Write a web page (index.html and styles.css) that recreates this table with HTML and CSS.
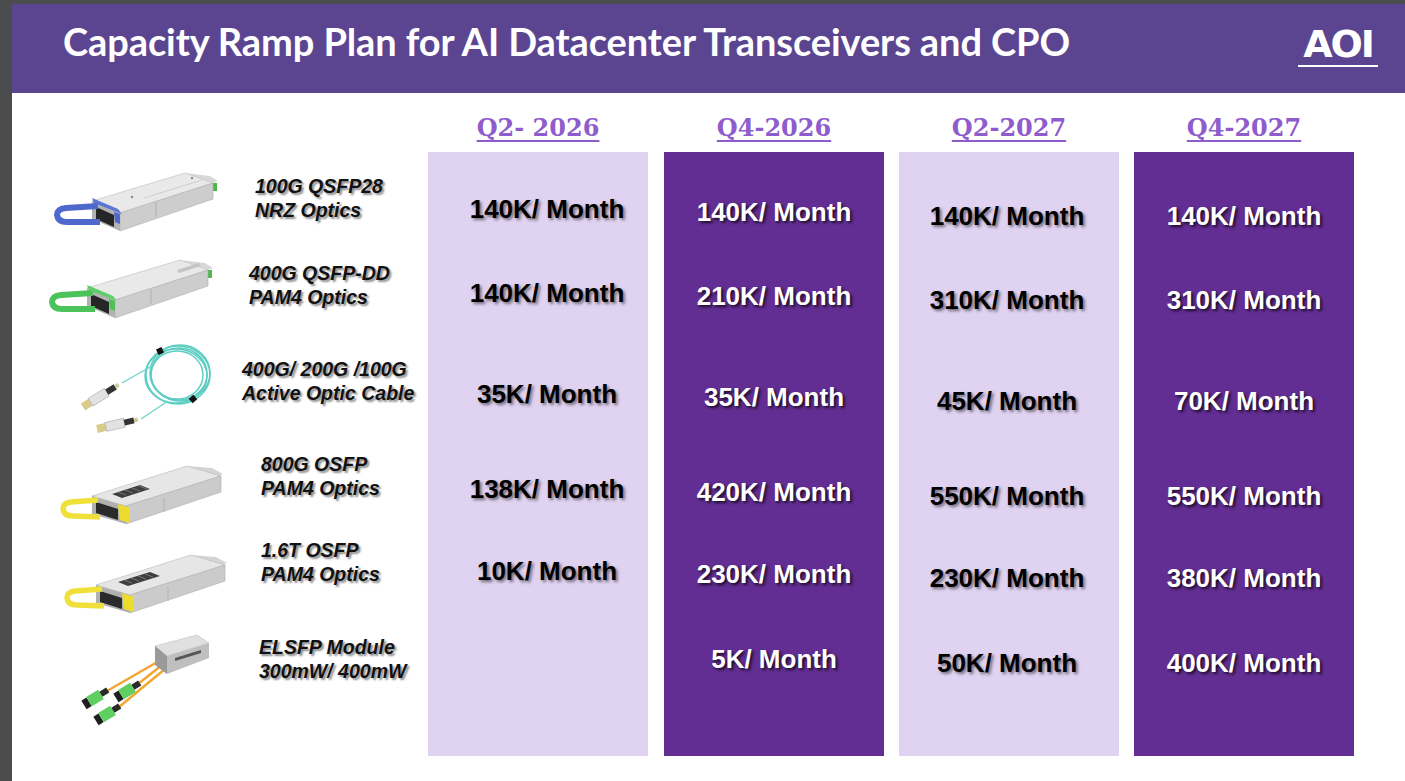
FILE: index.html
```html
<!DOCTYPE html>
<html lang="en">
<head>
<meta charset="utf-8">
<title>Capacity Ramp Plan for AI Datacenter Transceivers and CPO</title>
<link rel="stylesheet" href="styles.css">
</head>
<body>
<div class="slide">
  <header class="banner">
    <h1 class="title">Capacity Ramp Plan for AI Datacenter Transceivers and CPO</h1>
    <div class="logo">AOI</div>
  </header>
  <main class="board">
    <section class="products">
      <div class="product p1">
        <div class="prod-img">
          <svg class="pic pic1" width="168" height="64" viewBox="0 0 168 64">
            <polygon points="133,2 158,5 166,10 161,12" fill="#d8d8d8"/>
            <rect x="161" y="12" width="4" height="8" fill="#4cb84c"/>
            <polygon points="40,30 133,2 161,12 68,42" fill="#e9e9e9" stroke="#bcbcbc" stroke-width=".6"/>
            <polygon points="68,42 161,12 161,28 68,60" fill="#cdcdcd" stroke="#b0b0b0" stroke-width=".6"/>
            <polygon points="40,30 68,42 68,60 40,48" fill="#b3b3b3"/>
            <polygon points="44,36 62,44 62,56 44,48" fill="#262626"/>
            <line x1="92" y1="27" x2="150" y2="9" stroke="#c0c0c0" stroke-width=".7"/>
            <line x1="104" y1="31" x2="104" y2="46" stroke="#a8a8a8" stroke-width=".7"/>
            <circle cx="80" cy="26" r="1.2" fill="#888"/>
            <circle cx="140" cy="7" r="1.2" fill="#888"/>
            <path d="M46,35 L14,37 Q5,38 5,44 Q6,51 15,51 L48,51" fill="none" stroke="#4f68cc" stroke-width="6" stroke-linejoin="round"/>
            <polygon points="40,27 66,38 70,43 42,32" fill="#5a74d6"/>
            <polygon points="62,41 68,43 68,53 63,51" fill="#4f68cc"/>
          </svg>
        </div>
        <div class="prod-label">100G QSFP28<br>NRZ Optics</div>
      </div>
      <div class="product p2">
        <div class="prod-img">
          <svg class="pic pic2" width="168" height="64" viewBox="0 0 168 64">
            <polygon points="133,2 158,5 166,10 161,12" fill="#d8d8d8"/>
            <rect x="161" y="12" width="4" height="8" fill="#4cb84c"/>
            <polygon points="40,30 133,2 161,12 68,42" fill="#e9e9e9" stroke="#bcbcbc" stroke-width=".6"/>
            <polygon points="68,42 161,12 161,28 68,60" fill="#cdcdcd" stroke="#b0b0b0" stroke-width=".6"/>
            <polygon points="40,30 68,42 68,60 40,48" fill="#b3b3b3"/>
            <polygon points="44,36 62,44 62,56 44,48" fill="#262626"/>
            <polygon points="130,12 152,5 154,8 132,15" fill="#c4c4c4"/>
            <line x1="104" y1="31" x2="104" y2="46" stroke="#a8a8a8" stroke-width=".7"/>
            <path d="M46,35 L14,37 Q5,38 5,44 Q6,51 15,51 L48,51" fill="none" stroke="#4cc25a" stroke-width="6" stroke-linejoin="round"/>
            <polygon points="40,27 66,38 70,43 42,32" fill="#5ccf68"/>
            <polygon points="62,41 68,43 68,53 63,51" fill="#4cc25a"/>
          </svg>
        </div>
        <div class="prod-label">400G QSFP-DD<br>PAM4 Optics</div>
      </div>
      <div class="product p3">
        <div class="prod-img">
          <svg class="pic pic3" width="135" height="92" viewBox="0 0 135 92">
            <g fill="none" stroke="#5ccdc2" stroke-width="1.5">
              <ellipse cx="100" cy="32" rx="32" ry="29"/>
              <ellipse cx="102" cy="30" rx="30" ry="28"/>
              <ellipse cx="98" cy="33" rx="31" ry="27"/>
              <ellipse cx="101" cy="31" rx="28" ry="26"/>
              <ellipse cx="99" cy="32" rx="26" ry="24"/>
            </g>
            <line x1="44" y1="40" x2="72" y2="24" stroke="#6fd3c9" stroke-width="1.4"/>
            <line x1="63" y1="76" x2="90" y2="58" stroke="#6fd3c9" stroke-width="1.4"/>
            <rect x="79" y="5" width="6" height="6" fill="#111" transform="rotate(-25 82 8)"/>
            <rect x="112" y="53" width="6" height="6" fill="#111" transform="rotate(-40 115 56)"/>
            <g transform="translate(5,64) rotate(-32)">
              <rect x="0" y="-4" width="9" height="8" fill="#d9cc8a"/>
              <rect x="9" y="-4.5" width="19" height="9" fill="#e2e2e2" stroke="#999" stroke-width=".5"/>
              <rect x="28" y="-3" width="10" height="6" fill="#333"/>
              <rect x="38" y="-2" width="4" height="4" fill="#cfc9a0"/>
            </g>
            <g transform="translate(19,86) rotate(-13)">
              <rect x="0" y="-4" width="9" height="8" fill="#d9cc8a"/>
              <rect x="9" y="-4.5" width="19" height="9" fill="#e2e2e2" stroke="#999" stroke-width=".5"/>
              <rect x="28" y="-3" width="10" height="6" fill="#333"/>
              <rect x="38" y="-2" width="4" height="4" fill="#cfc9a0"/>
            </g>
          </svg>
        </div>
        <div class="prod-label">400G/ 200G /100G<br>Active Optic Cable</div>
      </div>
      <div class="product p4">
        <div class="prod-img">
          <svg class="pic pic4" width="164" height="66" viewBox="0 0 164 66">
            <polygon points="127,6 152,8 163,14 158,16" fill="#d4d4d4"/>
            <rect x="157" y="16" width="4" height="8" fill="#4cb84c"/>
            <polygon points="32,36 127,6 161,16 66,46" fill="#e6e6e6" stroke="#b8b8b8" stroke-width=".6"/>
            <polygon points="66,46 161,16 161,32 66,64" fill="#cbcbcb" stroke="#aeaeae" stroke-width=".6"/>
            <polygon points="32,36 66,46 66,64 32,54" fill="#b0b0b0"/>
            <polygon points="36,42 58,49 58,60 36,53" fill="#2a2a2a"/>
            <polygon points="52,34 80,25 90,29 62,38" fill="#3e3e3e"/>
            <g stroke="#8c8c8c" stroke-width=".7">
              <line x1="58" y1="32" x2="66" y2="35"/>
              <line x1="65" y1="30" x2="73" y2="33"/>
              <line x1="72" y1="28" x2="80" y2="31"/>
              <line x1="79" y1="26" x2="87" y2="29"/>
            </g>
            <line x1="104" y1="38" x2="104" y2="52" stroke="#a8a8a8" stroke-width=".7"/>
            <path d="M38,40 L11,42 Q3,43 3,49 Q4,56 13,56 L40,57" fill="none" stroke="#efe03a" stroke-width="5.5" stroke-linejoin="round"/>
            <polygon points="58,44 70,48 70,63 60,60" fill="#ecdc2e"/>
          </svg>
        </div>
        <div class="prod-label">800G OSFP<br>PAM4 Optics</div>
      </div>
      <div class="product p5">
        <div class="prod-img">
          <svg class="pic pic5" width="164" height="66" viewBox="0 0 164 66">
            <polygon points="127,6 152,8 163,14 158,16" fill="#d4d4d4"/>
            <rect x="157" y="16" width="4" height="8" fill="#4cb84c"/>
            <polygon points="32,36 127,6 161,16 66,46" fill="#e6e6e6" stroke="#b8b8b8" stroke-width=".6"/>
            <polygon points="66,46 161,16 161,32 66,64" fill="#cbcbcb" stroke="#aeaeae" stroke-width=".6"/>
            <polygon points="32,36 66,46 66,64 32,54" fill="#b0b0b0"/>
            <polygon points="36,42 58,49 58,60 36,53" fill="#2a2a2a"/>
            <polygon points="54,33 86,23 96,27 64,37" fill="#3e3e3e"/>
            <g stroke="#8c8c8c" stroke-width=".7">
              <line x1="60" y1="31" x2="68" y2="34"/>
              <line x1="67" y1="29" x2="75" y2="32"/>
              <line x1="74" y1="27" x2="82" y2="30"/>
              <line x1="81" y1="25" x2="89" y2="28"/>
            </g>
            <line x1="104" y1="38" x2="104" y2="52" stroke="#a8a8a8" stroke-width=".7"/>
            <path d="M38,40 L11,42 Q3,43 3,49 Q4,56 13,56 L40,57" fill="none" stroke="#efe03a" stroke-width="5.5" stroke-linejoin="round"/>
            <polygon points="58,44 70,48 70,63 60,60" fill="#ecdc2e"/>
          </svg>
        </div>
        <div class="prod-label">1.6T OSFP<br>PAM4 Optics</div>
      </div>
      <div class="product p6">
        <div class="prod-img">
          <svg class="pic pic6" width="140" height="100" viewBox="0 0 140 100">
            <g stroke="#f3a530" stroke-width="2.4" fill="none">
              <path d="M84,33 L32,63"/>
              <path d="M87,37 L63,56"/>
              <path d="M90,41 L44,79"/>
            </g>
            <polygon points="80,18 122,7 134,15 92,28" fill="#e0e0e0" stroke="#bdbdbd" stroke-width=".6"/>
            <polygon points="92,28 134,15 134,30 92,46" fill="#bfbfbf"/>
            <polygon points="80,18 92,28 92,46 80,37" fill="#9a9a9a"/>
            <polygon points="100,30 126,22 126,25 100,33" fill="#555"/>
            <g transform="translate(20,70) rotate(-32)">
              <rect x="-13" y="-5" width="6" height="10" fill="#1e1e1e"/>
              <rect x="-7" y="-5.5" width="14" height="11" fill="#5fcf5f"/>
              <rect x="7" y="-3" width="8" height="6" fill="#2a2a2a"/>
            </g>
            <g transform="translate(52,63) rotate(-32)">
              <rect x="-13" y="-5" width="6" height="10" fill="#1e1e1e"/>
              <rect x="-7" y="-5.5" width="14" height="11" fill="#5fcf5f"/>
              <rect x="7" y="-3" width="8" height="6" fill="#2a2a2a"/>
            </g>
            <g transform="translate(32,86) rotate(-32)">
              <rect x="-13" y="-5" width="6" height="10" fill="#1e1e1e"/>
              <rect x="-7" y="-5.5" width="14" height="11" fill="#5fcf5f"/>
              <rect x="7" y="-3" width="8" height="6" fill="#2a2a2a"/>
            </g>
          </svg>
        </div>
        <div class="prod-label">ELSFP Module<br>300mW/ 400mW</div>
      </div>
    </section>

    <section class="quarter light q1">
      <h2 class="q-head">Q2- 2026</h2>
      <div class="q-box">
        <div class="val">140K/ Month</div>
        <div class="val">140K/ Month</div>
        <div class="val">35K/ Month</div>
        <div class="val">138K/ Month</div>
        <div class="val">10K/ Month</div>
        <div class="val"></div>
      </div>
    </section>
    <section class="quarter dark q2">
      <h2 class="q-head">Q4-2026</h2>
      <div class="q-box">
        <div class="val">140K/ Month</div>
        <div class="val">210K/ Month</div>
        <div class="val">35K/ Month</div>
        <div class="val">420K/ Month</div>
        <div class="val">230K/ Month</div>
        <div class="val">5K/ Month</div>
      </div>
    </section>
    <section class="quarter light q3">
      <h2 class="q-head">Q2-2027</h2>
      <div class="q-box">
        <div class="val">140K/ Month</div>
        <div class="val">310K/ Month</div>
        <div class="val">45K/ Month</div>
        <div class="val">550K/ Month</div>
        <div class="val">230K/ Month</div>
        <div class="val">50K/ Month</div>
      </div>
    </section>
    <section class="quarter dark q4">
      <h2 class="q-head">Q4-2027</h2>
      <div class="q-box">
        <div class="val">140K/ Month</div>
        <div class="val">310K/ Month</div>
        <div class="val">70K/ Month</div>
        <div class="val">550K/ Month</div>
        <div class="val">380K/ Month</div>
        <div class="val">400K/ Month</div>
      </div>
    </section>
  </main>
</div>
</body>
</html>
```
FILE: styles.css
```css
html, body {
  margin: 0;
  padding: 0;
  background: #ffffff;
}

.slide {
  width: 1405px;
  height: 781px;
  box-sizing: border-box;
  border-top: 4px solid #4b4c4e;
  border-left: 12px solid #4b4c4e;
  background: #ffffff;
  overflow: hidden;
}

/* ---------- banner ---------- */
.banner {
  height: 89px;
  background: #5c4590;
  display: flex;
  justify-content: space-between;
  align-items: flex-start;
  padding: 0 27px 0 51px;
}

.title {
  margin: 18px 0 0;
  font-family: Lato, "Open Sans", sans-serif;
  font-weight: 700;
  font-size: 38px;
  line-height: 1;
  letter-spacing: -0.1px;
  color: #ffffff;
  white-space: nowrap;
}

.logo {
  margin-top: 21px;
  padding: 0 5px 2px;
  border-bottom: 2px solid #ffffff;
  font-family: "DejaVu Sans", "Liberation Sans", sans-serif;
  font-weight: 700;
  font-size: 38px;
  line-height: 1;
  letter-spacing: -2px;
  color: #ffffff;
}

/* ---------- board ---------- */
.board {
  display: flex;
  height: 688px;
}

.products {
  width: 416px;
  flex: none;
  padding-top: 67px;
  display: flex;
  flex-direction: column;
}

.product {
  display: flex;
  align-items: center;
}

.prod-img {
  width: 230px;
  flex: none;
  display: flex;
  align-items: center;
}

.pic {
  display: block;
  flex: none;
}

.prod-label {
  font-family: "Liberation Sans", Arial, sans-serif;
  font-weight: 700;
  font-style: italic;
  font-size: 19.5px;
  line-height: 24px;
  color: #111111;
  white-space: nowrap;
  text-shadow: 2px 2px 2px rgba(0, 0, 0, 0.45);
}

.p1 { height: 76px; }
.p2 { height: 98px; }
.p3 { height: 94px; }
.p4 { height: 96px; }
.p5 { height: 76px; }
.p6 { height: 118px; }

.p1 .pic { margin: 10px 0 0 40px; }
.p2 .pic { margin: 10px 0 0 35px; }
.p3 .pic { margin: 16px 0 0 66px; }
.p4 .pic { margin: 34px 0 0 48px; }
.p5 .pic { margin: 40px 0 0 52px; }
.p6 .pic { margin: 38px 0 0 63px; }

.p1 .prod-label { margin-left: 13px; }
.p2 .prod-label { margin-left: 7px; }
.p3 .prod-label { margin-left: 0; }
.p4 .prod-label { margin-left: 19px; }
.p5 .prod-label { margin-left: 19px; }
.p6 .prod-label { margin-left: 17px; }

/* ---------- quarter columns ---------- */
.quarter {
  width: 220px;
  flex: none;
  margin-right: 15px;
}

.q1 { margin-right: 16px; }

.q-head {
  height: 59px;
  box-sizing: border-box;
  margin: 0;
  padding-top: 23px;
  text-align: center;
  font-family: "DejaVu Serif", "Liberation Serif", serif;
  font-weight: 700;
  font-size: 24px;
  line-height: 24px;
  color: #8e5ccc;
  text-decoration: underline;
  text-decoration-thickness: 2px;
  text-underline-offset: 4px;
  white-space: nowrap;
}

.q-box {
  height: 604px;
  box-sizing: border-box;
  display: grid;
  grid-template-rows: 84px 84px 118px 72px 92px 78px;
  align-content: start;
}

.light .q-box { background: #e0d3f2; }
.dark .q-box { background: #632e93; }

.q1 .q-box { padding: 15px 0 0 18px; }
.q2 .q-box { padding-top: 18px; }
.q3 .q-box { padding: 22px 4px 0 0; }
.q4 .q-box { padding-top: 22px; }

.val {
  display: flex;
  align-items: center;
  justify-content: center;
  font-family: "Liberation Sans", Arial, sans-serif;
  font-weight: 700;
  font-size: 26px;
  line-height: 1;
  white-space: nowrap;
}

.light .val {
  color: #000000;
  text-shadow: 2px 2px 3px rgba(0, 0, 0, 0.5);
}

.dark .val {
  color: #ffffff;
  text-shadow: 2px 2px 3px rgba(0, 0, 0, 0.75);
}
```
